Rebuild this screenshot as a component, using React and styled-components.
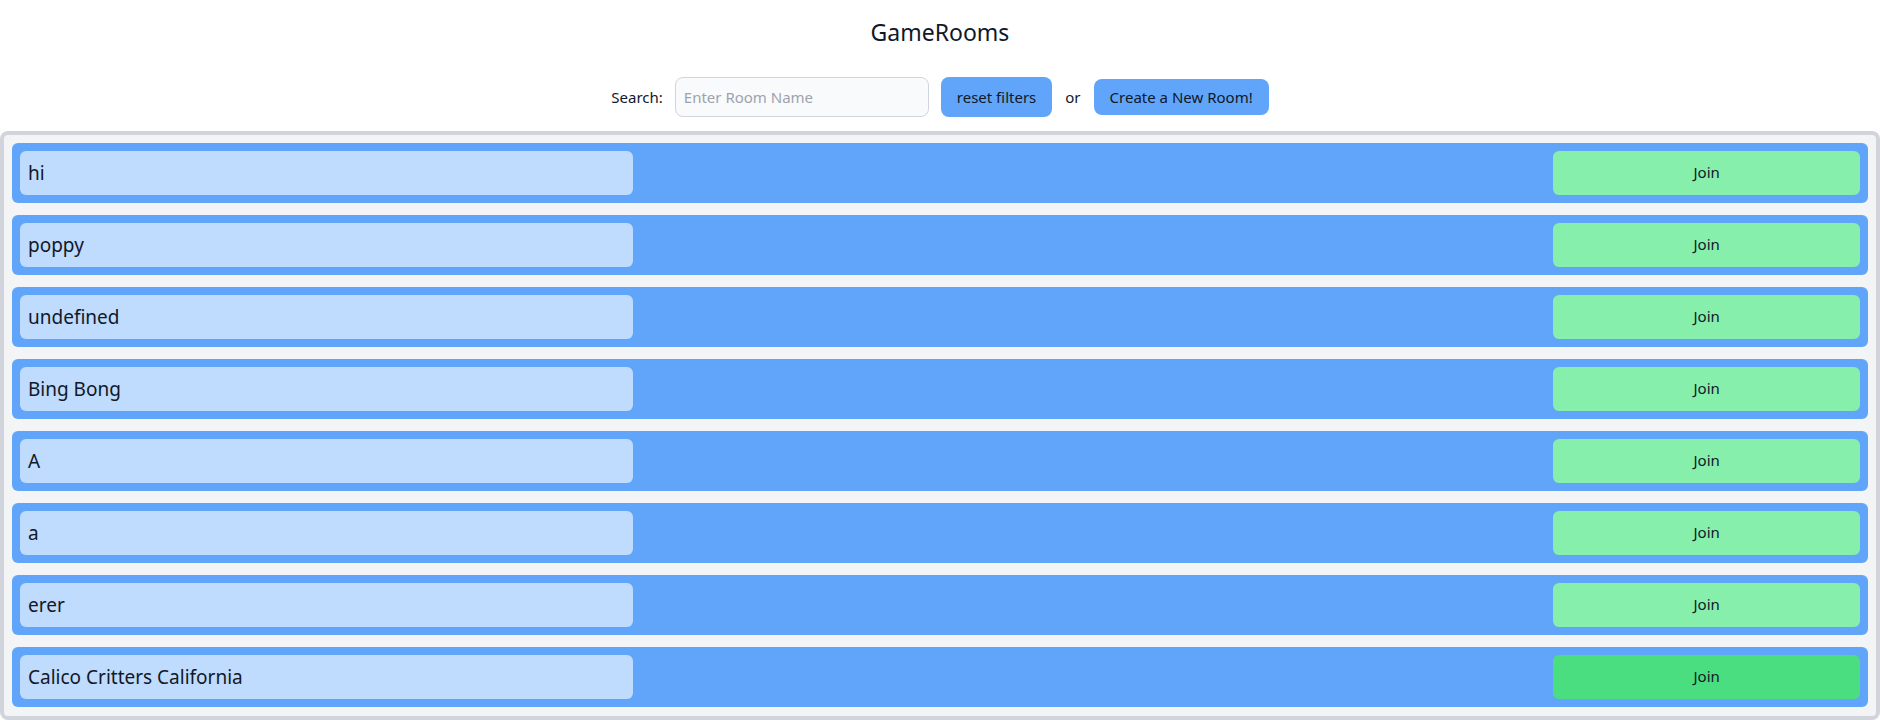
import React from "react";
import styled, { createGlobalStyle } from "styled-components";

const rooms = [
    "hi",
    "poppy",
    "undefined",
    "Bing Bong",
    "A",
    "a",
    "erer",
    "Calico Critters California",
];

const GlobalStyle = createGlobalStyle`
  body {
    margin: 0;
    font-family: "Noto Sans", "Open Sans", sans-serif;
    color: #111827;
    background: #ffffff;
  }
`;

const App = () => {
    return (
        <>
            <GlobalStyle/>
            <Page>
                <Title>GameRooms</Title>
                <Toolbar>
                    <Label>Search:</Label>
                    <SearchInput type="text" placeholder="Enter Room Name"/>
                    <BlueButton $tall>reset filters</BlueButton>
                    <Or>or</Or>
                    <BlueButton>Create a New Room!</BlueButton>
                </Toolbar>
                <Panel>
                    {
                        rooms.map((name, index) => {
                            return (
                                <Row key={index}>
                                    <Name>{name}</Name>
                                    <JoinButton $hover={index === rooms.length - 1}>Join</JoinButton>
                                </Row>
                            )
                        })
                    }
                </Panel>
            </Page>
        </>
    )
}

const Page = styled.div`
  display: flex;
  flex-direction: column;
  align-items: stretch;
`;

const Title = styled.h1`
  margin: 0;
  padding-top: 16px;
  height: 34px;
  font-size: 23px;
  font-weight: 400;
  line-height: 32px;
  text-align: center;
`;

const Toolbar = styled.div`
  display: flex;
  justify-content: center;
  align-items: center;
  margin-top: 27px;
  height: 40px;
  font-size: 15px;
`;

const Label = styled.span`
  margin-right: 12px;
`;

const SearchInput = styled.input`
  width: 254px;
  height: 40px;
  box-sizing: border-box;
  padding: 0 8px;
  border: 1px solid #d1d5db;
  border-radius: 8px;
  background: #f9fafb;
  font-family: inherit;
  font-size: 15px;
  margin-right: 12px;
  &::placeholder {
    color: #9ca3af;
  }
`;

const BlueButton = styled.button`
  height: ${props => props.$tall ? "40px" : "36px"};
  padding: 0 16px;
  border: none;
  border-radius: 8px;
  background: #60a5fa;
  color: #111827;
  font-family: inherit;
  font-size: 15px;
  cursor: pointer;
`;

const Or = styled.span`
  margin: 0 13px;
`;

const Panel = styled.div`
  margin-top: 14px;
  border: 4px solid #d1d5db;
  border-radius: 8px;
  background: #f3f4f6;
  padding: 8px 8px 0;
  height: 589px;
  box-sizing: border-box;
`;

const Row = styled.div`
  display: grid;
  grid-template-columns: repeat(6, 1fr);
  height: 60px;
  box-sizing: border-box;
  padding: 8px;
  margin-bottom: 12px;
  border-radius: 6px;
  background: #60a5fa;
`;

const Name = styled.div`
  grid-column: span 2;
  display: flex;
  align-items: center;
  padding-left: 8px;
  border-radius: 6px;
  background: #bfdbfe;
  font-size: 19px;
`;

const JoinButton = styled.button`
  grid-column: 6;
  border: none;
  border-radius: 6px;
  padding-bottom: 3px;
  background: ${props => props.$hover ? "#4ade80" : "#86efac"};
  color: #111827;
  font-family: inherit;
  font-size: 15px;
  cursor: pointer;
`;

export default App;
